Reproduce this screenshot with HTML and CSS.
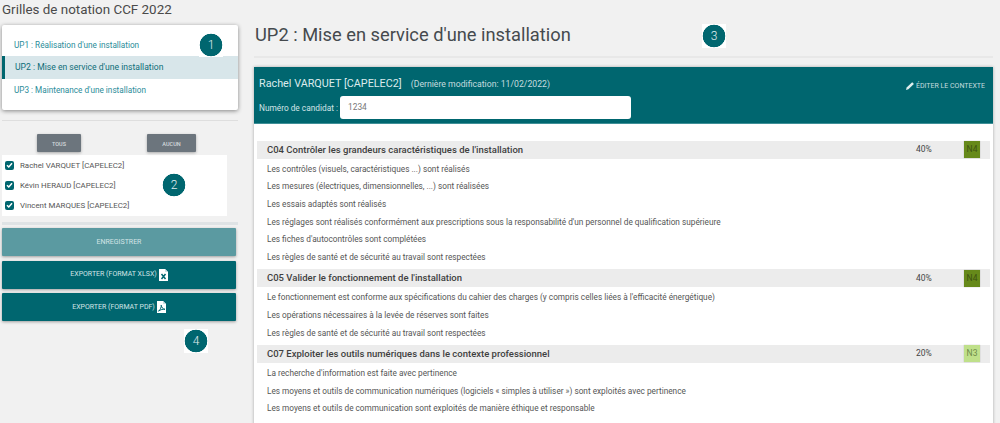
FILE: index.html
```html
<!DOCTYPE html>
<html lang="fr">
<head>
<meta charset="utf-8">
<title>Grilles de notation CCF 2022</title>
<link rel="stylesheet" href="styles.css">
</head>
<body>
<div class="page">
  <aside class="side">
    <h1 class="app-title">Grilles de notation CCF 2022</h1>
    <nav class="menu">
      <a class="menu-item">UP1 : Réalisation d'une installation</a>
      <a class="menu-item active">UP2 : Mise en service d'une installation</a>
      <a class="menu-item">UP3 : Maintenance d'une installation</a>
    </nav>
    <hr class="rule">
    <div class="pick">
      <button class="btn-grey tous">TOUS</button>
      <button class="btn-grey aucun">AUCUN</button>
    </div>
    <ul class="people">
      <li><span class="check"><svg viewBox="0 0 10 10" width="10" height="10"><path d="M2.2 5.2 4.2 7.2 7.8 3" fill="none" stroke="#fff" stroke-width="1.6"/></svg></span>Rachel VARQUET [CAPELEC2]</li>
      <li><span class="check"><svg viewBox="0 0 10 10" width="10" height="10"><path d="M2.2 5.2 4.2 7.2 7.8 3" fill="none" stroke="#fff" stroke-width="1.6"/></svg></span>Kévin HERAUD [CAPELEC2]</li>
      <li><span class="check"><svg viewBox="0 0 10 10" width="10" height="10"><path d="M2.2 5.2 4.2 7.2 7.8 3" fill="none" stroke="#fff" stroke-width="1.6"/></svg></span>Vincent MARQUES [CAPELEC2]</li>
    </ul>
    <hr class="rule thick">
    <div class="actions">
      <button class="btn save">ENREGISTRER</button>
      <button class="btn">EXPORTER (FORMAT XLSX)
        <svg class="file" viewBox="0 0 9 12" width="9" height="12"><path d="M0 0H6L9 3V12H0Z" fill="#fff"/><path d="M6 0V3H9" fill="#cfe0e3"/><path d="M2.5 5 6.500 10M6.500 5 2.500 10" stroke="#00666f" stroke-width="1.500"/></svg>
      </button>
      <button class="btn">EXPORTER (FORMAT PDF)
        <svg class="file" viewBox="0 0 9 12" width="9" height="12"><path d="M0 0H6L9 3V12H0Z" fill="#fff"/><path d="M6 0V3H9" fill="#cfe0e3"/><path d="M1.500 10.200C3.500 8.500 4.500 6 4.200 4.200 4.600 6.500 6 8.300 8 8.300 6 8 3.500 8.500 1.500 10.200Z" fill="none" stroke="#00666f" stroke-width="1"/></svg>
      </button>
    </div>
  </aside>

  <main class="content">
    <h2 class="page-title">UP2 : Mise en service d'une installation</h2>
    <hr class="title-rule">
    <section class="panel">
      <header class="panel-head">
        <div class="head-top">
          <div class="who"><span class="name">Rachel VARQUET [CAPELEC2]</span><span class="modif">(Dernière modification: 11/02/2022)</span></div>
          <a class="edit"><svg viewBox="0 0 10 10" width="8" height="8"><path d="M0 10 .8 7 7 .8a1 1 0 0 1 1.400 0l.800.800a1 1 0 0 1 0 1.400L3 9.200Z" fill="#dfeeee"/></svg>ÉDITER LE CONTEXTE</a>
        </div>
        <div class="candidate"><label>Numéro de candidat :</label><div class="input">1234</div></div>
      </header>
      <div class="panel-body">
        <div class="comp"><span class="comp-name">C04 Contrôler les grandeurs caractéristiques de l'installation</span><span class="pct">40%</span><span class="level n4">N4</span></div>
        <p class="crit">Les contrôles (visuels, caractéristiques ...) sont réalisés</p>
        <p class="crit">Les mesures (électriques, dimensionnelles, ...) sont réalisées</p>
        <p class="crit">Les essais adaptés sont réalisés</p>
        <p class="crit">Les réglages sont réalisés conformément aux prescriptions sous la responsabilité d'un personnel de qualification supérieure</p>
        <p class="crit">Les fiches d'autocontrôles sont complétées</p>
        <p class="crit">Les règles de santé et de sécurité au travail sont respectées</p>
        <div class="comp"><span class="comp-name">C05 Valider le fonctionnement de l'installation</span><span class="pct">40%</span><span class="level n4">N4</span></div>
        <p class="crit">Le fonctionnement est conforme aux spécifications du cahier des charges (y compris celles liées à l'efficacité énergétique)</p>
        <p class="crit">Les opérations nécessaires à la levée de réserves sont faites</p>
        <p class="crit">Les règles de santé et de sécurité au travail sont respectées</p>
        <div class="comp"><span class="comp-name">C07 Exploiter les outils numériques dans le contexte professionnel</span><span class="pct">20%</span><span class="level n3">N3</span></div>
        <p class="crit">La recherche d'information est faite avec pertinence</p>
        <p class="crit">Les moyens et outils de communication numériques (logiciels « simples à utiliser ») sont exploités avec pertinence</p>
        <p class="crit">Les moyens et outils de communication sont exploités de manière éthique et responsable</p>
      </div>
    </section>
  </main>

  <span class="marker m1">1</span>
  <span class="marker m2">2</span>
  <span class="marker m3">3</span>
  <span class="marker m4">4</span>
</div>
</body>
</html>
```
FILE: styles.css
```css
* { box-sizing: border-box; }
html, body { margin: 0; height: 100%; overflow: hidden; }
body { background: #f1f1f1; color: #444; font-family: Roboto, "Liberation Sans", sans-serif; }
.page { position: relative; display: flex; height: 423px; overflow: hidden; }

.side { width: 236px; margin-left: 2px; flex: none; }
.app-title { margin: 0; padding-top: 1px; height: 25px; font-size: 13.4px; line-height: 18px; font-weight: 400; color: #4a4a4a; white-space: nowrap; }
.menu { display: flex; flex-direction: column; height: 85px; padding-top: 8px; background: #fff; border-radius: 2px; box-shadow: 0 1px 4px rgba(0,0,0,.45); }
.menu-item { height: 23px; padding-left: 12px; font-size: 8.2px; line-height: 23px; color: #2a8c99; white-space: nowrap; }
.menu-item:first-child { line-height: 25px; }
.menu-item.active { padding-left: 10px; border-left: 3px solid #00666f; background: #d8e6ea; color: #0d6d78; font-size: 8.6px; }
.rule { height: 1px; margin: 10px 0 0; border: 0; background: #dedede; }
.rule.thick { height: 3px; margin-top: 6px; background: #dfe3e5; }
.pick { display: flex; height: 22px; margin-top: 13px; }
.btn-grey { height: 18px; border: 0; border-radius: 1px; background: #6c757d; color: #d5dadd; font: 500 5.5px/18px Roboto, sans-serif; box-shadow: 0 1px 3px rgba(0,0,0,.3); }
.tous { width: 44px; margin-left: 35px; }
.aucun { width: 49px; margin-left: 66px; }
.people { width: 225px; height: 61px; margin: 0; padding: 0; list-style: none; background: #fff; }
.people li { display: flex; align-items: center; height: 20px; padding-left: 3px; font-size: 7.9px; color: #555; white-space: nowrap; margin-bottom: 0; }
.people li:first-child { margin-top: -1px; }
.check { display: flex; align-items: center; justify-content: center; width: 9px; height: 9px; margin-right: 6px; border-radius: 2px; background: #00666f; }
.actions { display: flex; flex-direction: column; gap: 4.5px; margin-top: 3px; }
.btn { display: flex; align-items: center; justify-content: center; gap: 2px; width: 234px; height: 28px; border: 0; border-radius: 1px; background: #00666f; color: #d3e4e6; font: 400 7px/1 Roboto, sans-serif; box-shadow: 0 1px 3px rgba(0,0,0,.35); white-space: nowrap; }
.btn.save { background: #5b9aa1; }

.content { width: 739px; margin-left: 16px; flex: none; }
.page-title { margin: 0; padding: 22px 0 0 1px; height: 56px; font-size: 18.3px; line-height: 26px; font-weight: 400; color: #454a4e; white-space: nowrap; }
.title-rule { height: 2px; margin: 0; border: 0; background: #e8e8e8; }
.panel { margin-top: 9px; background: #fff; box-shadow: 0 0 3px rgba(0,0,0,.3); height: 400px; }
.panel-head { height: 57px; padding: 9px 6px 0 5px; background: #00666f; border-bottom: 1px solid #3f8f97; color: #dceaec; }
.head-top { display: flex; justify-content: space-between; height: 20px; }
.who { margin-top: -4px; }
.name { font-size: 10.8px; line-height: 14px; color: #dcebed; }
.modif { margin-left: 9px; font-size: 8.7px; color: #c5dcdf; }
.edit { display: flex; gap: 2px; align-items: center; height: 8px; margin-top: 6px; margin-right: 2px; font-size: 7px; color: #c5dcdf; white-space: nowrap; }
.candidate { display: flex; align-items: center; height: 23px; }
.candidate label { width: 81px; font-size: 8.3px; color: #d3e4e6; white-space: nowrap; }
.input { width: 291px; height: 23px; padding-left: 8px; border-radius: 3px; background: #fff; color: #777; font-size: 8.4px; line-height: 23px; }
.panel-body { padding: 17px 3px 0; }
.comp { display: flex; align-items: center; height: 17.5px; padding: 0 0 1px 10px; background: #ececec; font-size: 9.5px; white-space: nowrap; }
.comp-name { width: 649px; color: #3f3f3f; font-weight: 500; }
.pct { width: 48px; font-size: 8.5px; color: #444; }
.level { width: 16px; height: 17px; margin-bottom: -1px; text-align: center; font-size: 8.5px; line-height: 17px; box-shadow: 0 0 1px rgba(0,0,0,.3); }
.n4 { background: #66891a; color: #3d5212; }
.n3 { background: #bfe08a; color: #6e8c4a; }
.crit { height: 17.6px; margin: 0; padding-left: 10px; font-size: 8.25px; line-height: 17.6px; color: #555; white-space: nowrap; }
.comp + .crit { margin-top: 2.4px; }
.crit + .comp { margin-top: 3px; }

.marker { position: absolute; display: flex; align-items: center; justify-content: center; width: 24px; height: 24px; background: radial-gradient(circle, #00666f 11px, #fff 11.6px); color: #e0eeef; font-size: 12px; font-weight: 300; }
.m1 { left: 199px; top: 33px; }
.m2 { left: 162px; top: 173px; }
.m3 { left: 702px; top: 24px; }
.m4 { left: 184px; top: 329px; }
```
